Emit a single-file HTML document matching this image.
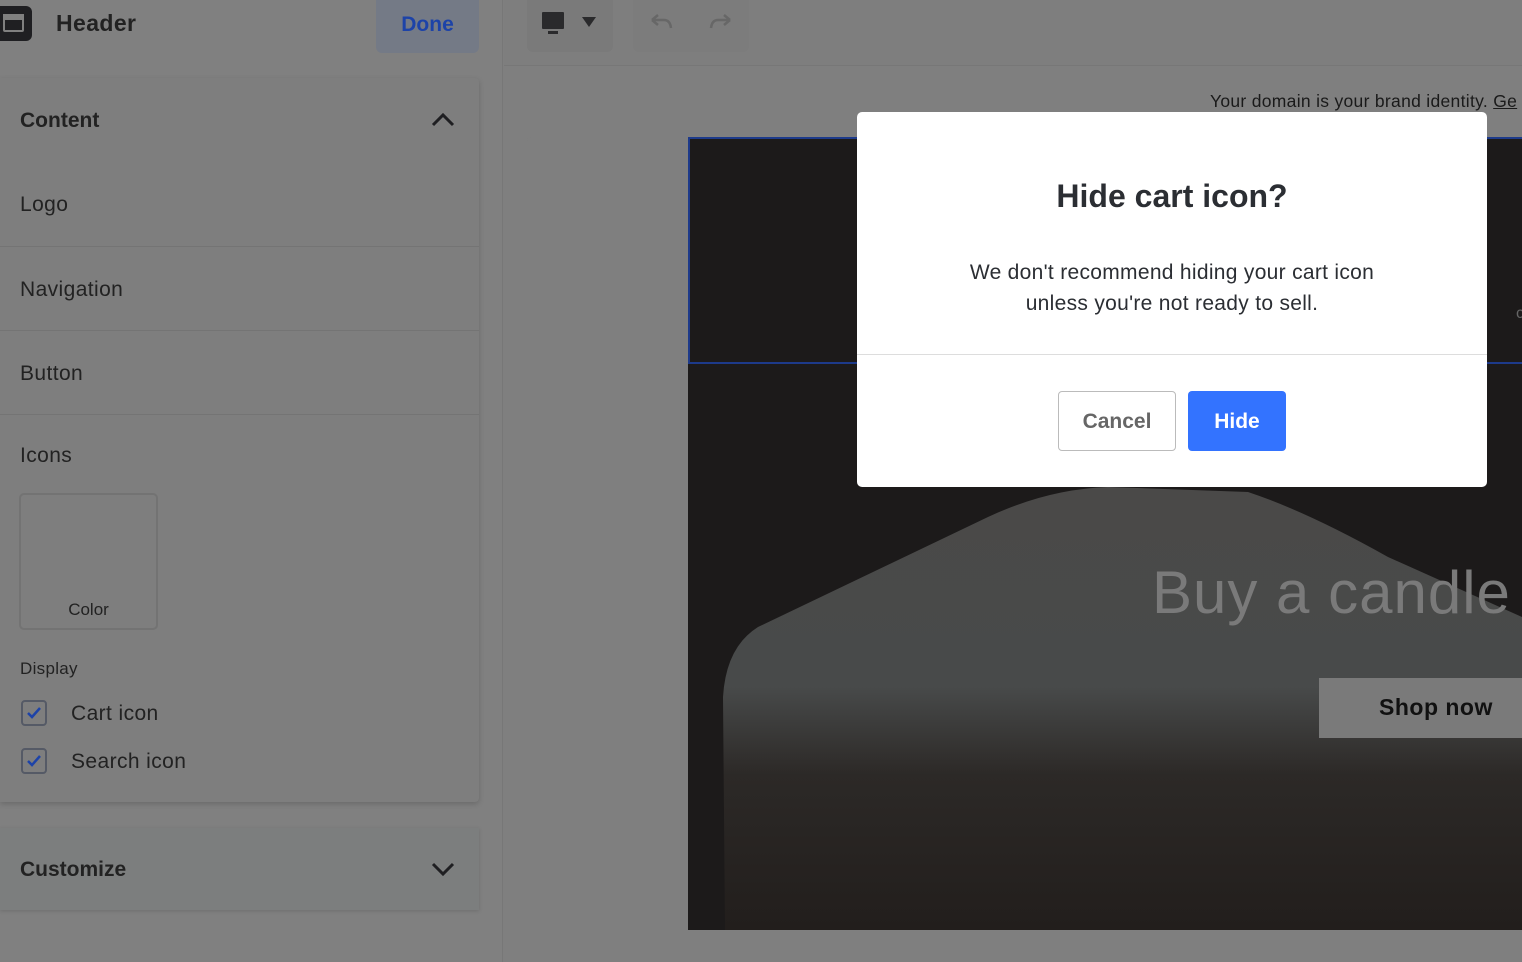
<!DOCTYPE html>
<html><head><style>
*{margin:0;padding:0;box-sizing:border-box}
body{width:1522px;height:962px;overflow:hidden;background:#7f7f7f;font-family:"Liberation Sans",sans-serif;position:relative;color:#1f1f22}
.abs{position:absolute}
.lp{left:0;top:0;width:503px;height:962px;background:#808080;border-right:1px solid #777}
.card{left:0;top:78px;width:479px;height:724px;background:#7e7e7e;box-shadow:0 2px 6px rgba(0,0,0,.18);border-radius:0 4px 4px 0}
.row{position:absolute;left:0;width:479px;border-bottom:1px solid #747474;font-size:21px;letter-spacing:.4px;color:#222}
.chk{position:absolute;left:21px;width:26px;height:26px;border:2px solid #555a66;border-radius:4px;background:#7e7e7e}
</style></head><body>
<div class="abs lp"></div>
<div class="abs" style="left:0;top:6px;width:32px;height:35px;background:#1f1f22;border-radius:0 6px 6px 0"></div>
<div class="abs" style="left:3px;top:14px;width:21px;height:18px;border:2.5px solid #808080;border-radius:2px"></div>
<div class="abs" style="left:3px;top:14px;width:21px;height:6px;background:#808080"></div>
<div class="abs" style="left:56px;top:10px;font-size:23px;font-weight:bold;color:#222;letter-spacing:.4px">Header</div>
<div class="abs" style="left:376px;top:0;width:103px;height:53px;background:#747a86;border-radius:0 0 6px 6px;color:#1d43a8;font-size:21px;font-weight:bold;text-align:center;line-height:50px">Done</div>
<div class="abs card"></div>
<div class="abs" style="left:20px;top:109px;font-size:21px;font-weight:bold;color:#222">Content</div>
<svg class="abs" style="left:430px;top:110px" width="26" height="18"><path d="M3 15 L13 5 L23 15" fill="none" stroke="#1f1f22" stroke-width="3"/></svg>
<div class="row" style="top:163px;height:84px;padding:30px 20px">Logo</div>
<div class="row" style="top:247px;height:84px;padding:31px 20px">Navigation</div>
<div class="row" style="top:331px;height:84px;padding:31px 20px">Button</div>
<div class="abs" style="left:20px;top:444px;font-size:21px;letter-spacing:.4px;color:#222">Icons</div>
<div class="abs" style="left:19px;top:493px;width:139px;height:137px;border:2px solid #737373;border-radius:5px"></div>
<div class="abs" style="left:19px;top:600px;width:139px;text-align:center;font-size:17px;color:#222">Color</div>
<div class="abs" style="left:20px;top:659px;font-size:17px;letter-spacing:.3px;color:#222">Display</div>
<div class="chk" style="top:700px"></div>
<svg class="abs" style="left:24px;top:703px" width="20" height="20"><path d="M4 10 L8 14 L16 5" fill="none" stroke="#1d43a8" stroke-width="2.5"/></svg>
<div class="abs" style="left:71px;top:702px;font-size:21px;letter-spacing:.4px;color:#222">Cart icon</div>
<div class="chk" style="top:748px"></div>
<svg class="abs" style="left:24px;top:751px" width="20" height="20"><path d="M4 10 L8 14 L16 5" fill="none" stroke="#1d43a8" stroke-width="2.5"/></svg>
<div class="abs" style="left:71px;top:750px;font-size:21px;letter-spacing:.4px;color:#222">Search icon</div>
<div class="abs" style="left:0;top:828px;width:479px;height:82px;background:#7c7e7e;box-shadow:0 1px 4px rgba(0,0,0,.15)"></div>
<div class="abs" style="left:20px;top:858px;font-size:21px;font-weight:bold;color:#222">Customize</div>
<svg class="abs" style="left:430px;top:860px" width="26" height="18"><path d="M3 4 L13 14 L23 4" fill="none" stroke="#1f1f22" stroke-width="3"/></svg>
<div class="abs" style="left:504px;top:0;width:1018px;height:66px;background:#7e7e7e;border-bottom:1px solid #777"></div>
<div class="abs" style="left:527px;top:0;width:86px;height:52px;background:#7a7a7a;border-radius:0 0 6px 6px"></div>
<div class="abs" style="left:542px;top:12px;width:22px;height:17px;background:#2a2a2c;border-radius:1px"></div>
<div class="abs" style="left:548px;top:31px;width:10px;height:3px;background:#2a2a2c"></div>
<div class="abs" style="left:582px;top:17px;width:0;height:0;border-left:7px solid transparent;border-right:7px solid transparent;border-top:10px solid #2a2a2c"></div>
<div class="abs" style="left:633px;top:0;width:116px;height:52px;background:#7c7c7c;border-radius:0 0 6px 6px"></div>
<svg class="abs" style="left:648px;top:12px" width="26" height="20"><path d="M4 8 L10 3 M4 8 L10 13 M4 8 L16 8 Q22 8 23 16" fill="none" stroke="#676767" stroke-width="2.5"/></svg>
<svg class="abs" style="left:708px;top:12px" width="26" height="20"><path d="M22 8 L16 3 M22 8 L16 13 M22 8 L10 8 Q4 8 3 16" fill="none" stroke="#676767" stroke-width="2.5"/></svg>
<div class="abs" style="left:1210px;top:91px;font-size:17.5px;letter-spacing:.3px;color:#1a1a1a;white-space:nowrap">Your domain is your brand identity. <u>Ge</u></div>
<div class="abs" style="left:527px;top:137px;width:995px;height:825px;background:#7f7f7f;border-radius:4px 0 0 0"></div>
<div class="abs" style="left:688px;top:137px;width:834px;height:793px;background:#1c1a1a;overflow:hidden">
 <svg width="834" height="793" style="position:absolute;left:0;top:0">
  <defs><linearGradient id="g" x1="0" y1="0" x2="0" y2="1">
   <stop offset="0" stop-color="#4a4948"/><stop offset="0.45" stop-color="#484a4a"/><stop offset="0.65" stop-color="#2c2927"/><stop offset="1" stop-color="#221e1c"/></linearGradient></defs>
  <path d="M37 793 L35 560 Q38 510 70 490 L300 380 Q360 352 420 350 L560 355 Q620 375 700 420 L834 480 L834 793 Z" fill="url(#g)"/>
 </svg>
 <div style="position:absolute;left:0;top:0;width:834px;height:227px;border:2px solid #1d3a8a;border-right:none"></div>
 <div style="position:absolute;left:464px;top:421px;font-size:60px;color:#7a7a7a;letter-spacing:1px;white-space:nowrap;font-family:'Liberation Sans',sans-serif">Buy a candle</div>
 <div style="position:absolute;left:631px;top:541px;width:210px;height:60px;background:#7a7a7a;font-size:23px;font-weight:bold;color:#111;padding:16px 0 0 60px;white-space:nowrap;letter-spacing:.5px">Shop now</div>
</div>
<div class="abs" style="left:857px;top:112px;width:630px;height:375px;background:#fff;border-radius:5px">
 <div style="position:absolute;top:66px;width:630px;text-align:center;font-size:32px;font-weight:bold;color:#2b2e33">Hide cart icon?</div>
 <div style="position:absolute;top:145px;width:630px;text-align:center;font-size:21px;letter-spacing:.3px;line-height:31px;color:#2b2e33">We don't recommend hiding your cart icon<br>unless you're not ready to sell.</div>
 <div style="position:absolute;top:242px;width:630px;border-top:1px solid #ddd"></div>
 <div style="position:absolute;left:201px;top:279px;width:118px;height:60px;border:1px solid #bbb;border-radius:4px;text-align:center;line-height:60px;font-size:21px;font-weight:bold;color:#666">Cancel</div>
 <div style="position:absolute;left:331px;top:279px;width:98px;height:60px;background:#3373ff;border-radius:4px;text-align:center;line-height:62px;font-size:21px;font-weight:bold;color:#fff">Hide</div>
</div>
<div class="abs" style="left:1516px;top:305px;font-size:16px;color:#666">c</div>
</body></html>
